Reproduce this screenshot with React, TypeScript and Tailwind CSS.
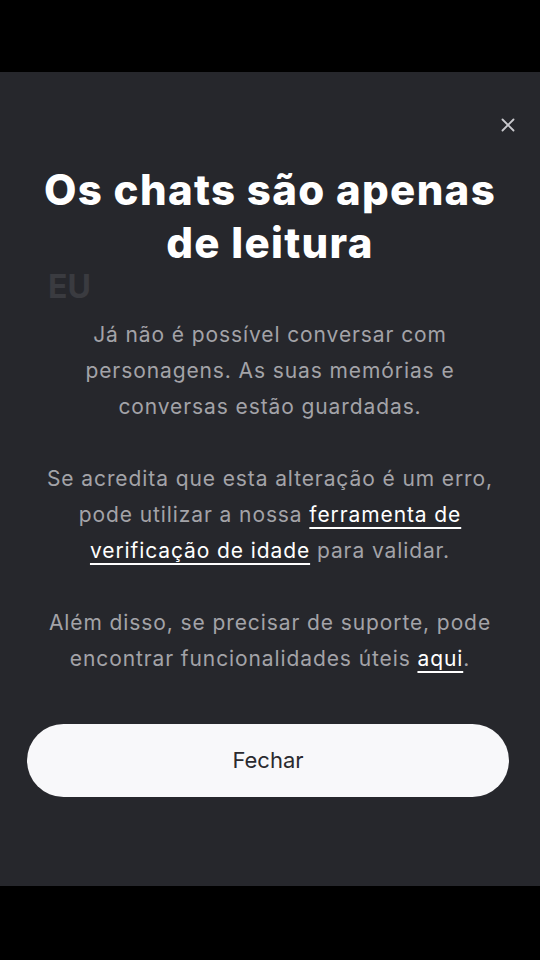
import { X } from 'lucide-react';

const font = { fontFamily: 'Inter, "Noto Sans", sans-serif' };

const LinkText = ({ children }: { children: React.ReactNode }) => (
  <a className="text-white underline decoration-2 underline-offset-[5px]" href="#">
    {children}
  </a>
);

const App = () => {
  return (
    <div className="flex h-[960px] w-[540px] flex-col bg-black" style={font}>
      <div className="h-[72px] shrink-0" />
      <section className="relative flex h-[814px] shrink-0 flex-col bg-[#26272c] px-[20px]">
        <button className="absolute right-[17px] top-[38px] p-1 text-[#c9c9ce]" aria-label="Fechar">
          <X size={22} strokeWidth={2} />
        </button>

        <h1 className="mt-[91px] text-center text-[42px] font-extrabold leading-[53px] tracking-[1.3px] text-white">
          Os chats são apenas
          <br />
          de leitura
        </h1>

        <div className="pl-[28px] text-[32px] font-bold leading-[36px] text-[#3a3b40]">EU</div>

        <div className="mt-[12px] flex flex-col gap-[36px] text-center text-[21px] leading-[36px] tracking-[0.9px] text-[#a3a3a8]">
          <p>
            Já não é possível conversar com
            <br />
            personagens. As suas memórias e
            <br />
            conversas estão guardadas.
          </p>
          <p>
            Se acredita que esta alteração é um erro,
            <br />
            pode utilizar a nossa <LinkText>ferramenta de</LinkText>
            <br />
            <LinkText>verificação de idade</LinkText> para validar.
          </p>
          <p>
            Além disso, se precisar de suporte, pode
            <br />
            encontrar funcionalidades úteis <LinkText>aqui</LinkText>.
          </p>
        </div>

        <button className="ml-[7px] mr-[11px] mt-[47px] h-[73px] rounded-full bg-[#f8f8fa] text-[22px] text-[#2a2a2e]">
          Fechar
        </button>
      </section>
      <div className="flex-1" />
    </div>
  );
};

export default App;
